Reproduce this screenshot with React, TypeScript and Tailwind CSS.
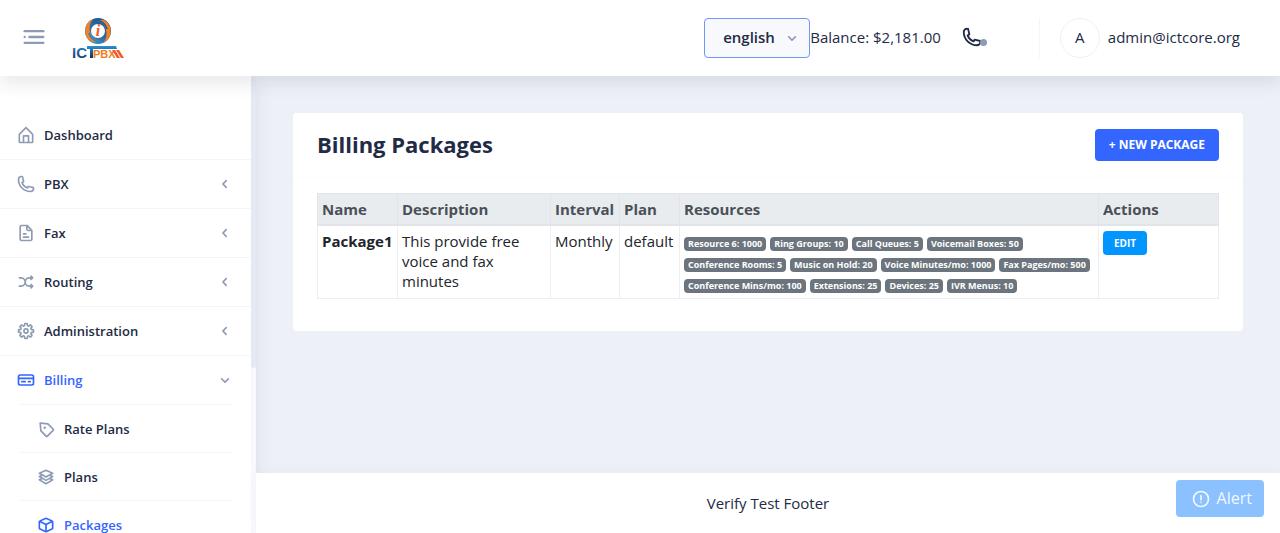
import React from 'react';

const icons = {
  home: ['M20.42 10.18L12.71 2.3a1 1 0 0 0-1.42 0l-7.71 7.89A2 2 0 0 0 3 11.62V20a2 2 0 0 0 1.89 2h14.22A2 2 0 0 0 21 20v-8.38a2.07 2.07 0 0 0-.58-1.44zM10 20v-6h4v6zm9 0h-3v-7a1 1 0 0 0-1-1H9a1 1 0 0 0-1 1v7H5v-8.42l7-7.15 7 7.19z'],
  phone: ['M17.4 22A15.42 15.42 0 0 1 2 6.6 4.6 4.6 0 0 1 6.6 2a3.94 3.94 0 0 1 .77.07 3.79 3.79 0 0 1 .72.18 1 1 0 0 1 .65.75l1.37 6a1 1 0 0 1-.26.92c-.13.14-.14.15-1.37.79a9.91 9.91 0 0 0 4.87 4.89c.65-1.24.66-1.25.8-1.38a1 1 0 0 1 .92-.26l6 1.37a1 1 0 0 1 .72.65 4.34 4.34 0 0 1 .19.73 4.77 4.77 0 0 1 .06.76A4.6 4.6 0 0 1 17.4 22zM6.6 4A2.61 2.61 0 0 0 4 6.6 13.41 13.41 0 0 0 17.4 20a2.61 2.61 0 0 0 2.6-2.6v-.33L15.36 16l-.29.55c-.45.87-.78 1.5-1.62 1.16a11.85 11.85 0 0 1-7.18-7.21c-.36-.78.32-1.14 1.18-1.59L8 8.64 6.93 4z'],
  file: [
    'M15 16H9a1 1 0 0 0 0 2h6a1 1 0 0 0 0-2z',
    'M9 14h3a1 1 0 0 0 0-2H9a1 1 0 0 0 0 2z',
    'M19.74 8.33l-5.44-6a1 1 0 0 0-.74-.33h-7A2.53 2.53 0 0 0 4 4.5v15A2.53 2.53 0 0 0 6.56 22h10.88A2.53 2.53 0 0 0 20 19.5V9a1 1 0 0 0-.26-.67zM14 5l2.74 3h-2a.79.79 0 0 1-.74-.85zm3.44 15H6.56a.53.53 0 0 1-.56-.5v-15a.53.53 0 0 1 .56-.5H12v3.15A2.79 2.79 0 0 0 14.71 10H18v9.5a.53.53 0 0 1-.56.5z',
  ],
  shuffle: ['M18.71 14.29a1 1 0 0 0-1.42 1.42l.29.29H16a4 4 0 0 1 0-8h1.59l-.3.29a1 1 0 0 0 0 1.42A1 1 0 0 0 18 10a1 1 0 0 0 .71-.29l2-2A1 1 0 0 0 21 7a1 1 0 0 0-.29-.71l-2-2a1 1 0 0 0-1.42 1.42l.29.29H16a6 6 0 0 0-5 2.69A6 6 0 0 0 6 6H4a1 1 0 0 0 0 2h2a4 4 0 0 1 0 8H4a1 1 0 0 0 0 2h2a6 6 0 0 0 5-2.69A6 6 0 0 0 16 18h1.59l-.3.29a1 1 0 0 0 0 1.42A1 1 0 0 0 18 20a1 1 0 0 0 .71-.29l2-2A1 1 0 0 0 21 17a1 1 0 0 0-.29-.71z'],
  settings: [
    'M12.94 22h-1.89a1.68 1.68 0 0 1-1.68-1.68v-1.09a.34.34 0 0 0-.22-.29.38.38 0 0 0-.41 0l-.74.8a1.67 1.67 0 0 1-2.37 0L4.26 18.4a1.66 1.66 0 0 1-.5-1.19 1.72 1.72 0 0 1 .5-1.21l.74-.74a.34.34 0 0 0 0-.37c-.06-.15-.16-.26-.3-.26H3.68A1.69 1.69 0 0 1 2 12.94v-1.89a1.68 1.68 0 0 1 1.68-1.68h1.09a.34.34 0 0 0 .29-.22.38.38 0 0 0 0-.41L4.26 8a1.67 1.67 0 0 1 0-2.37L5.6 4.26a1.65 1.65 0 0 1 1.18-.5 1.72 1.72 0 0 1 1.22.5l.74.74a.34.34 0 0 0 .37 0c.15-.06.26-.16.26-.3V3.68A1.69 1.69 0 0 1 11.06 2H13a1.68 1.68 0 0 1 1.68 1.68v1.09a.34.34 0 0 0 .22.29.38.38 0 0 0 .41 0l.69-.8a1.67 1.67 0 0 1 2.37 0l1.37 1.34a1.67 1.67 0 0 1 .5 1.19 1.63 1.63 0 0 1-.5 1.18l-.74.74a.34.34 0 0 0 0 .37c.06.15.16.26.3.26h1.09A1.69 1.69 0 0 1 22 11.06V13a1.68 1.68 0 0 1-1.68 1.68h-1.09a.34.34 0 0 0-.29.22.34.34 0 0 0 0 .37l.77.77a1.67 1.67 0 0 1 0 2.37l-1.31 1.33a1.65 1.65 0 0 1-1.18.5 1.72 1.72 0 0 1-1.19-.5l-.77-.74a.34.34 0 0 0-.37 0c-.15.06-.26.16-.26.3v1.09A1.69 1.69 0 0 1 12.94 22zm-1.57-2h1.26v-.77a2.33 2.33 0 0 1 1.46-2.14 2.36 2.36 0 0 1 2.59.47l.54.54.88-.88-.54-.55a2.34 2.34 0 0 1-.48-2.56 2.33 2.33 0 0 1 2.14-1.45H20v-1.29h-.77a2.33 2.33 0 0 1-2.14-1.46 2.36 2.36 0 0 1 .47-2.59l.54-.54-.88-.88-.55.54a2.39 2.39 0 0 1-4-1.67V4h-1.3v.77a2.33 2.33 0 0 1-1.46 2.14 2.36 2.36 0 0 1-2.59-.47l-.54-.54-.88.88.54.55a2.39 2.39 0 0 1-1.67 4H4v1.26h.77a2.33 2.33 0 0 1 2.14 1.46 2.36 2.36 0 0 1-.47 2.59l-.54.54.88.88.55-.54a2.39 2.39 0 0 1 4 1.67z',
    'M12 15.5a3.5 3.5 0 1 1 3.5-3.5 3.5 3.5 0 0 1-3.5 3.5zm0-5a1.5 1.5 0 1 0 1.5 1.5 1.5 1.5 0 0 0-1.5-1.5z',
  ],
  card: [
    'M19 5H5a3 3 0 0 0-3 3v8a3 3 0 0 0 3 3h14a3 3 0 0 0 3-3V8a3 3 0 0 0-3-3zM4 8a1 1 0 0 1 1-1h14a1 1 0 0 1 1 1v1H4zm16 8a1 1 0 0 1-1 1H5a1 1 0 0 1-1-1v-5h16z',
    'M7 15h4a1 1 0 0 0 0-2H7a1 1 0 0 0 0 2z',
    'M15 15h2a1 1 0 0 0 0-2h-2a1 1 0 0 0 0 2z',
  ],
  tag: [
    'M12.87 22a1.84 1.84 0 0 1-1.29-.53l-6.41-6.42a1 1 0 0 1-.29-.61L4 5.09a1 1 0 0 1 .29-.8 1 1 0 0 1 .8-.29l9.35.88a1 1 0 0 1 .61.29l6.42 6.41a1.82 1.82 0 0 1 0 2.57l-7.32 7.32a1.82 1.82 0 0 1-1.28.53zm-6-8.11l6 6 7.05-7.05-6-6-7.81-.73z',
    'M10.5 9a1.5 1.5 0 1 0 0 3 1.5 1.5 0 0 0 0-3z',
  ],
  layers: ['M21 11.35a1 1 0 0 0-.61-.86l-2.15-.92 2.26-1.3a1 1 0 0 0 .5-.92 1 1 0 0 0-.61-.86l-8-3.41a1 1 0 0 0-.78 0l-8 3.41a1 1 0 0 0-.61.86 1 1 0 0 0 .5.92l2.26 1.3-2.15.92a1 1 0 0 0-.61.86 1 1 0 0 0 .5.92l2.26 1.3-2.15.92a1 1 0 0 0-.61.86 1 1 0 0 0 .5.92l8 4.6a1 1 0 0 0 1 0l8-4.6a1 1 0 0 0 .5-.92 1 1 0 0 0-.61-.86l-2.15-.92 2.26-1.3a1 1 0 0 0 .5-.92zm-9-6.26l5.76 2.45L12 10.85 6.24 7.54zm-.5 7.78a1 1 0 0 0 1 0l3.57-2 1.69.72L12 14.85l-5.76-3.31 1.69-.72zm6.26 2.67L12 18.85l-5.76-3.31 1.69-.72 3.57 2.05a1 1 0 0 0 1 0l3.57-2.05z'],
  cube: ['M20.66 7.26c0-.07-.1-.14-.15-.21l-.09-.1a2.5 2.5 0 0 0-.86-.68l-6.4-3a2.7 2.7 0 0 0-2.26 0l-6.4 3a2.6 2.6 0 0 0-.86.68L3.52 7a1 1 0 0 0-.15.2A2.39 2.39 0 0 0 3 8.46v7.06a2.49 2.49 0 0 0 1.46 2.26l6.4 3a2.7 2.7 0 0 0 2.27 0l6.4-3A2.49 2.49 0 0 0 21 15.54V8.46a2.39 2.39 0 0 0-.34-1.2zm-8.95-2.2a.73.73 0 0 1 .58 0l5.33 2.48L12 10.15 6.38 7.54zM5.3 16a.47.47 0 0 1-.3-.43V9.1l6 2.79v6.72zm13.39 0L13 18.61v-6.72l6-2.79v6.44a.48.48 0 0 1-.31.46z'],
  left: ['M13.36 17a1 1 0 0 1-.72-.31l-3.86-4a1 1 0 0 1 0-1.4l4-4a1 1 0 1 1 1.42 1.42L10.9 12l3.18 3.3a1 1 0 0 1 0 1.41 1 1 0 0 1-.72.29z'],
  down: ['M12 15.5a1 1 0 0 1-.71-.29l-4-4a1 1 0 1 1 1.42-1.42L12 13.1l3.3-3.18a1 1 0 1 1 1.38 1.44l-4 3.86a1 1 0 0 1-.68.28z'],
  alert: [
    'M12 2a10 10 0 1 0 10 10A10 10 0 0 0 12 2zm0 18a8 8 0 1 1 8-8 8 8 0 0 1-8 8z',
    'M12 15a1 1 0 1 0 0 2 1 1 0 0 0 0-2z',
    'M12 7a1 1 0 0 0-1 1v5a1 1 0 0 0 2 0V8a1 1 0 0 0-1-1z',
  ],
  menu: [
    'M4 11a1 1 0 1 0 0 2 1 1 0 0 0 0-2z',
    'M8 11h12a1 1 0 0 1 0 2H8a1 1 0 0 1 0-2z',
    'M4 16h16a1 1 0 0 1 0 2H4a1 1 0 0 1 0-2z',
    'M4 6h16a1 1 0 0 1 0 2H4a1 1 0 0 1 0-2z',
  ],
};

type IconName = keyof typeof icons;

function Icon({ name, className }: { name: IconName; className: string }) {
  return (
    <svg viewBox="0 0 24 24" fill="currentColor" aria-hidden="true" className={`shrink-0 ${className}`}>
      {icons[name].map((d) => (
        <path key={d} d={d} />
      ))}
    </svg>
  );
}

const menu: { title: string; icon: IconName; arrow?: IconName; active?: boolean }[] = [
  { title: 'Dashboard', icon: 'home' },
  { title: 'PBX', icon: 'phone', arrow: 'left' },
  { title: 'Fax', icon: 'file', arrow: 'left' },
  { title: 'Routing', icon: 'shuffle', arrow: 'left' },
  { title: 'Administration', icon: 'settings', arrow: 'left' },
  { title: 'Billing', icon: 'card', arrow: 'down', active: true },
];

const billingMenu: { title: string; icon: IconName; active?: boolean }[] = [
  { title: 'Rate Plans', icon: 'tag' },
  { title: 'Plans', icon: 'layers' },
  { title: 'Packages', icon: 'cube', active: true },
];

const packages = [
  {
    name: 'Package1',
    description: 'This provide free voice and fax minutes',
    interval: 'Monthly',
    plan: 'default',
    resources: [
      'Resource 6: 1000',
      'Ring Groups: 10',
      'Call Queues: 5',
      'Voicemail Boxes: 50',
      'Conference Rooms: 5',
      'Music on Hold: 20',
      'Voice Minutes/mo: 1000',
      'Fax Pages/mo: 500',
      'Conference Mins/mo: 100',
      'Extensions: 25',
      'Devices: 25',
      'IVR Menus: 10',
    ],
  },
];

function Logo() {
  return (
    <svg viewBox="0 0 52 44" className="w-[52px] h-11" role="img" aria-label="ICTPBX">
      <defs>
        <linearGradient id="ict" x1="0" y1="0" x2="0" y2="1">
          <stop offset="0" stopColor="#2f8fd0" />
          <stop offset="1" stopColor="#0d2f63" />
        </linearGradient>
        <linearGradient id="ring" x1="0" y1="1" x2="1" y2="0">
          <stop offset="0" stopColor="#3f9ad6" />
          <stop offset="1" stopColor="#143f74" />
        </linearGradient>
      </defs>
      <circle cx="26" cy="15" r="13" fill="url(#ring)" />
      <path id="swirl" d="M25 5Q30 2 35 6A13 13 0 0 1 31 27Q36 21 34 14Q32 7 25 5Z" fill="#f7801f" />
      <path d="M27 25Q22 28 17 24A13 13 0 0 1 21 3Q16 9 18 16Q20 23 27 25Z" fill="#f7801f" />
      <path d="M22 4Q32 4 35 13" fill="none" stroke="#1c5f9c" strokeWidth="2" />
      <path d="M30 26Q20 26 17 17" fill="none" stroke="#2f86c4" strokeWidth="2" />
      <circle cx="26" cy="15" r="7" fill="#fff" />
      <text x="26" y="20" textAnchor="middle" fontFamily="Liberation Serif, serif" fontSize="16" fontWeight="700" fontStyle="italic" fill="#f15a24">i</text>
      <text x="0" y="42" fontFamily="Liberation Sans, sans-serif" fontSize="15" fontWeight="700" fill="url(#ict)">IC</text>
      <path d="M15 30H44L45 33H21V42H18V33H15Z" fill="url(#ict)" />
      <text x="21" y="42" fontFamily="Liberation Sans, sans-serif" fontSize="11" fontWeight="700" fill="#f47b20">PBX</text>
      <path d="M40 34h3l5 8h-3zM44 34h3l5 8h-3z" fill="#f15a24" />
    </svg>
  );
}

function Header() {
  return (
    <header className="relative z-20 flex h-[76px] shrink-0 items-center justify-between bg-white pl-5 pr-10 shadow-[0_8px_16px_0_rgba(44,51,73,0.1)]">
      <div className="flex items-center gap-6">
        <button type="button" aria-label="Toggle menu" className="pb-0.5 text-[#8f9bb3]">
          <Icon name="menu" className="size-7" />
        </button>
        <a href="#">
          <Logo />
        </a>
      </div>
      <div className="flex items-center">
        <div className="relative text-[#8f9bb3]">
          <select
            aria-label="Language"
            defaultValue="english"
            className="h-10 w-[106px] appearance-none rounded-[4px] border border-[#6f95ff] bg-[#f7f9fc] pb-0.5 pl-[18px] text-[15px] font-semibold text-[#222b45]"
          >
            <option value="english">english</option>
          </select>
          <Icon name="down" className="pointer-events-none absolute right-2 top-2.5 size-5" />
        </div>
        <span className="pb-0.5">Balance: $2,181.00</span>
        <button type="button" aria-label="Phone" className="relative ml-5 pb-0.5">
          <Icon name="phone" className="size-[22px]" />
          <span className="absolute -right-1 bottom-1 size-[7px] rounded-full bg-[#8f9bb3]" />
        </button>
        <div className="ml-14 flex items-center gap-2 border-l border-[#f2f5fa] pl-5">
          <div className="flex size-10 items-center justify-center rounded-full border border-[#edf1f7] pb-0.5">A</div>
          <span className="pb-0.5">admin@ictcore.org</span>
        </div>
      </div>
    </header>
  );
}

function Sidebar() {
  return (
    <aside className="flex w-64 shrink-0 overflow-hidden bg-white shadow-[0_8px_16px_0_rgba(44,51,73,0.1)]">
      <nav className="min-w-0 flex-1 pt-[35px] text-[13px] font-semibold">
        <ul>
          {menu.map((item) => (
            <li key={item.title} className="border-b border-[#f3f5fa] last:border-b-0">
              <a href="#" className={`flex h-12 items-center gap-2 px-4 ${item.active ? 'text-[#3366ff]' : ''}`}>
                <Icon name={item.icon} className={`size-5 ${item.active ? '' : 'text-[#8f9bb3]'}`} />
                <span className="flex-1">{item.title}</span>
                {item.arrow && <Icon name={item.arrow} className="size-5 text-[#8f9bb3]" />}
              </a>
            </li>
          ))}
        </ul>
        <ul className="px-5">
          {billingMenu.map((item) => (
            <li key={item.title} className="h-12 border-t border-[#f3f5fa]">
              <a href="#" className={`flex h-full items-center gap-2 px-4 ${item.active ? 'text-[#3366ff]' : ''}`}>
                <Icon name={item.icon} className={`size-5 ${item.active ? '' : 'text-[#8f9bb3]'}`} />
                <span>{item.title}</span>
              </a>
            </li>
          ))}
        </ul>
      </nav>
      <div className="w-[5px] bg-[#f7f9fc]">
        <div className="h-[64%] rounded-[2px] bg-[#e4e9f2]" />
      </div>
    </aside>
  );
}

function PackagesTable() {
  const th = 'border border-b-2 border-[#e1e5e9] px-1 py-[5px]';
  const td = 'border border-[#ebeef2] px-1 py-[5px]';

  return (
    <table className="w-full table-fixed border-collapse text-left leading-5 text-[#212529]">
      <thead className="bg-[#e9ecef] text-[#495057]">
        <tr>
          <th className={`w-[80px] ${th}`}>Name</th>
          <th className={`w-[153px] ${th}`}>Description</th>
          <th className={`w-[69px] ${th}`}>Interval</th>
          <th className={`w-[60px] ${th}`}>Plan</th>
          <th className={th}>Resources</th>
          <th className={`w-[120px] ${th}`}>Actions</th>
        </tr>
      </thead>
      <tbody className="align-top">
        {packages.map((pkg) => (
          <tr key={pkg.name}>
            <td className={`font-bold ${td}`}>{pkg.name}</td>
            <td className={td}>{pkg.description}</td>
            <td className={td}>{pkg.interval}</td>
            <td className={td}>{pkg.plan}</td>
            <td className={td}>
              <div className="flex flex-wrap gap-x-1 gap-y-[7px] pt-1.5">
                {pkg.resources.map((resource) => (
                  <span key={resource} className="h-3.5 rounded-[4px] bg-[#6c757d] px-1 text-[9px] font-bold leading-[14px] text-white">
                    {resource}
                  </span>
                ))}
              </div>
            </td>
            <td className={td}>
              <button type="button" className="block h-6 rounded-[4px] bg-[#0095ff] px-[11px] text-[10px] font-bold text-white">
                EDIT
              </button>
            </td>
          </tr>
        ))}
      </tbody>
    </table>
  );
}

function App() {
  return (
    <div className="flex h-screen flex-col overflow-hidden bg-[#edf1f7] font-['Open_Sans',sans-serif] text-[15px] leading-6 text-[#222b45]">
      <Header />
      <div className="flex min-h-0 flex-1">
        <Sidebar />
        <div className="flex min-w-0 flex-1 flex-col">
          <main className="flex-1 p-[37px]">
            <section className="rounded-[4px] bg-white">
              <div className="flex items-start justify-between border-b border-[#fafbfd] px-6 py-4">
                <h1 className="text-[22px] font-bold leading-[30px]">Billing Packages</h1>
                <button type="button" className="h-8 rounded-[4px] bg-[#3366ff] px-3.5 text-[12px] font-bold text-white">
                  + NEW PACKAGE
                </button>
              </div>
              <div className="px-6 pb-8 pt-[15px]">
                <PackagesTable />
              </div>
            </section>
          </main>
          <footer className="relative flex h-[60px] items-center justify-center bg-white shadow-[0_0_16px_0_rgba(44,51,73,0.03)]">
            Verify Test Footer
          </footer>
        </div>
      </div>
      <button type="button" className="fixed bottom-4 right-4 z-30 flex items-center gap-1.5 rounded-[4px] bg-[#8bc1ff] py-1.5 pl-[15px] pr-3 text-[16px] leading-[25px] text-[#f2f8ff]">
        <Icon name="alert" className="size-5" />
        Alert
      </button>
    </div>
  );
}

export default App;
